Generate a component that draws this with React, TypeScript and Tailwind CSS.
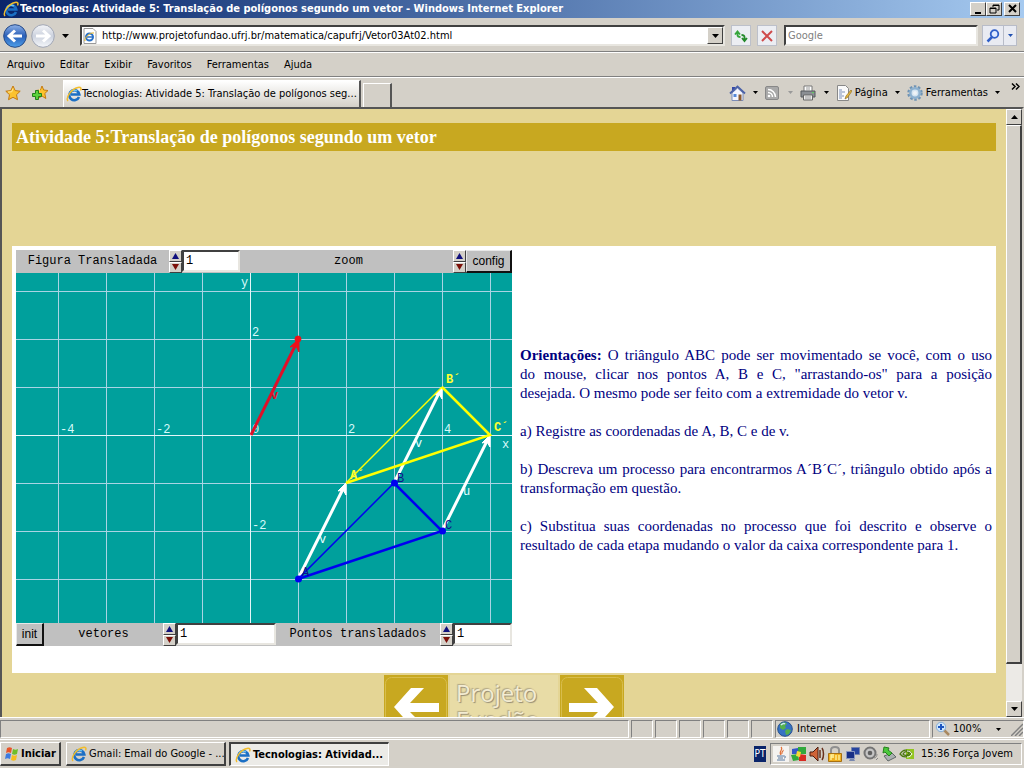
import type { ReactNode } from "react";

const raised = "border border-t-white border-l-white border-r-[#404040] border-b-[#404040] bg-[#d4d0c8]";
const sunken = "border-2 border-t-[#404040] border-l-[#404040] border-r-[#e8e6e0] border-b-[#e8e6e0] bg-white";

export default function App() {
    return (
        <div className="flex h-screen flex-col overflow-hidden bg-[#d4d0c8] font-['DejaVu_Sans_Condensed','Noto_Sans',sans-serif] text-[11px] leading-4 text-black">
            <TitleBar />
            <AddressRow />
            <MenuRow />
            <TabRow />
            <div className="flex min-h-0 flex-1 border-2 border-b-0 border-[#555] border-r-[#d4d0c8]">
                <Page />
                <Scrollbar />
            </div>
            <StatusBar />
            <Taskbar />
        </div>
    )
}

function TitleBar() {
    return (
        <header className="flex h-[18px] shrink-0 items-center bg-linear-to-r from-[#0a246a] to-[#a6caf0] pl-[3px] pr-1 text-white">
            <IeIcon className="mr-px size-4" />
            <h1 className="min-w-0 flex-1 truncate font-bold">
                Tecnologias: Atividade 5: Translação de polígonos segundo um vetor - Windows Internet Explorer
            </h1>
            <WindowButton label="Minimizar"><path d="M3 9h6v2H3z" fill="#000" /></WindowButton>
            <WindowButton label="Restaurar">
                <path d="M5 2h6v5H9M5 2v2M2 5h6v5H2z M5 2.5h6 M2 5.5h6" fill="none" stroke="#000" />
            </WindowButton>
            <span className="w-[2px]" />
            <WindowButton label="Fechar"><path d="M3 2l7 7M10 2L3 9" stroke="#000" strokeWidth="2" /></WindowButton>
        </header>
    )
}

function WindowButton({ label, children }: { label: string; children: ReactNode }) {
    return (
        <button type="button" aria-label={label} className={`flex h-[14px] w-4 items-center justify-center ${raised}`}>
            <svg viewBox="0 0 13 12" className="h-3 w-[13px]">{children}</svg>
        </button>
    )
}

function Caret({ className = "" }: { className?: string }) {
    return (
        <svg viewBox="0 0 7 4" className={`h-1 w-[7px] shrink-0 ${className}`}>
            <path d="M0 0h7L3.500 4z" fill="currentColor" />
        </svg>
    )
}

function AddressRow() {
    return (
        <div className="flex h-[34px] shrink-0 items-center border-b border-[#808080] pl-[3px] pr-[7px] pt-0.5">
            <button type="button" aria-label="Voltar"><RoundArrow /></button>
            <button type="button" aria-label="Avançar" className="ml-1"><RoundArrow forward /></button>
            <button type="button" aria-label="Páginas recentes" className="mx-[7px]"><Caret /></button>
            <div className={`ml-1 flex h-[21px] min-w-0 flex-1 items-center ${sunken}`}>
                <svg viewBox="0 0 16 16" className="size-4 shrink-0">
                    <path d="M2 .5h9l3 3v12H2z" fill="#fff" stroke="#999" />
                    <circle cx="7.500" cy="9" r="3.500" fill="none" stroke="#2871c8" strokeWidth="2" />
                    <path d="M5 9h6" stroke="#2871c8" strokeWidth="1.500" />
                    <path d="M3 13C2 10 8 4 12 5" fill="none" stroke="#e8b420" />
                </svg>
                <input
                    aria-label="Endereço"
                    className="min-w-0 flex-1 bg-transparent px-1 outline-none"
                    defaultValue="http://www.projetofundao.ufrj.br/matematica/capufrj/Vetor03At02.html"
                />
                <button type="button" aria-label="Mostrar endereços" className={`flex h-[17px] w-4 items-center justify-center ${raised}`}>
                    <Caret />
                </button>
            </div>
            <ToolButton label="Atualizar">
                <path d="M4.500 3v4q0 2 3 2M2 6.500L4.500 3.500 7 6.500" fill="none" stroke="#36a63c" strokeWidth="1.800" />
                <path d="M11.500 13V9q0-2-3-2M9 10l2.500 3 2.500-3" fill="none" stroke="#238a2a" strokeWidth="1.800" />
            </ToolButton>
            <ToolButton label="Parar">
                <path d="M3 3l10 10M13 3L3 13" stroke="#cf4b4b" strokeWidth="2" />
            </ToolButton>
            <input aria-label="Pesquisar" placeholder="Google" className={`ml-[7px] h-[21px] w-[194px] px-0.5 outline-none placeholder:text-[#808080] ${sunken}`} />
            <div className="ml-1 flex h-[21px] border border-[#b8bcc8] bg-[#e9ebf2]">
                <button type="button" aria-label="Buscar" className="w-5">
                    <svg viewBox="0 0 16 16" className="mx-auto size-4">
                        <circle cx="9.500" cy="6" r="3.800" fill="#dfeaff" stroke="#2f5fc8" strokeWidth="1.800" />
                        <path d="M7 9l-4.500 4.500" stroke="#2f5fc8" strokeWidth="2.500" />
                    </svg>
                </button>
                <button type="button" aria-label="Opções de busca" className="flex w-[13px] items-center justify-center border-l border-[#b8bcc8] text-[#2050b0]">
                    <Small />
                </button>
            </div>
        </div>
    )
}

function RoundArrow({ forward = false }: { forward?: boolean }) {
    return (
        <svg viewBox="0 0 24 24" className="block size-6">
            <defs>
                <linearGradient id={forward ? "fwd" : "back"} x1="0" y1="0" x2="0" y2="1">
                    <stop offset="0" stopColor={forward ? "#f4f5f8" : "#8fb2e8"} />
                    <stop offset=".5" stopColor={forward ? "#ccd2de" : "#2a5fb8"} />
                    <stop offset="1" stopColor={forward ? "#f5f7fa" : "#4fa0ea"} />
                </linearGradient>
            </defs>
            <circle cx="12" cy="12" r="11.300" fill={forward ? "url(#fwd)" : "url(#back)"} stroke={forward ? "#a0a6b4" : "#274a86"} />
            {forward
                ? <path d="M5 12h12M12 6.500l6 5.500-6 5.500" fill="none" stroke="#fff" strokeWidth="3" />
                : <path d="M19 12H7M12 6.500L6 12l6 5.500" fill="none" stroke="#fff" strokeWidth="3" />}
        </svg>
    )
}

function ToolButton({ label, children }: { label: string; children: ReactNode }) {
    return (
        <button type="button" aria-label={label} className="ml-[6px] flex h-[21px] w-5 items-center justify-center border border-[#bcc0ca] bg-[#eceef3]">
            <svg viewBox="0 0 16 16" className="size-4">{children}</svg>
        </button>
    )
}

function MenuRow() {
    const items = ["Arquivo", "Editar", "Exibir", "Favoritos", "Ferramentas", "Ajuda"];
    return (
        <nav className="flex h-[25px] shrink-0 items-center gap-[15px] border-b border-t border-b-[#808080] border-t-white pl-[7px]">
            {items.map((item) => <button key={item} type="button">{item}</button>)}
        </nav>
    )
}

function TabRow() {
    return (
        <div className="flex h-[30px] shrink-0 items-center border-t border-white">
            <button type="button" aria-label="Favoritos" className="ml-[5px]">
                <StarIcon />
            </button>
            <button type="button" aria-label="Adicionar a favoritos" className="ml-[11px]">
                <StarIcon plus />
            </button>
            <button type="button" className="ml-[15px] flex h-[27px] w-[298px] items-center self-end border-l border-r-2 border-t border-l-white border-r-[#555] border-t-white bg-linear-to-b from-white to-[#d4d0c8] pl-0.5 text-left">
                <IeIcon className="size-4" />
                <span className="whitespace-nowrap">Tecnologias: Atividade 5: Translação de polígonos seg...</span>
            </button>
            <button type="button" aria-label="Nova guia" className="ml-0.5 h-6 w-[29px] self-end border-l border-r-2 border-t border-l-white border-r-[#555] border-t-white" />
            <div className="ml-auto flex items-center pr-1">
                <button type="button" aria-label="Página inicial" className="flex items-center gap-[7px]">
                    <svg viewBox="0 0 17 16" className="h-4 w-[17px]">
                        <path d="M3 2h3v4H3z" fill="#3549a8" />
                        <path d="M3 8l5.500-5L14 8v7.500H3z" fill="#f4f6ff" stroke="#7b8cb8" />
                        <path d="M1 8.500L8.500 1.500 16 8.500" fill="none" stroke="#4b62a8" strokeWidth="1.800" />
                        <path d="M4.500 9h3v3h-3z" fill="#5588d8" />
                        <path d="M9.500 9.500h3v6h-3z" fill="#8a5a30" />
                    </svg>
                    <Small />
                </button>
                <button type="button" aria-label="Feeds" className="ml-[7px] flex items-center gap-[9px] text-[#999]">
                    <svg viewBox="0 0 14 14" className="size-[14px]">
                        <rect x=".5" y=".5" width="13" height="13" rx="1.500" fill="#a9a9a9" stroke="#888" />
                        <circle cx="4" cy="10" r="1.300" fill="#fff" />
                        <path d="M3 6.500a4.500 4.500 0 0 1 4.500 4.500M3 3.500a7.500 7.500 0 0 1 7.500 7.500" fill="none" stroke="#fff" strokeWidth="1.500" />
                    </svg>
                    <Small />
                </button>
                <button type="button" aria-label="Imprimir" className="ml-[7px] flex items-center gap-2">
                    <svg viewBox="0 0 16 16" className="size-4">
                        <path d="M4 1h8v6H4z" fill="#fff" stroke="#777" />
                        <path d="M1 6h14v6H1z" fill="#8b8f94" stroke="#55585c" />
                        <path d="M3.500 10h9v5h-9z" fill="#eee" stroke="#666" />
                        <path d="M5 12h6M5 14h6M6 3h4M6 5h4" stroke="#999" />
                        <path d="M12 7h2v1h-2z" fill="#5fd05f" />
                    </svg>
                    <Small />
                </button>
                <button type="button" className="ml-[7px] flex items-center">
                    <svg viewBox="0 0 16 16" className="mr-[3px] size-4">
                        <path d="M1.500.5h8l3 3v12h-11z" fill="#fafafa" stroke="#888" />
                        <path d="M3 5h3M3 7h6M3 9h3M3 11h5M3 13h3" stroke="#7c90b8" />
                        <path d="M15 5l-5 6-1 3 2.500-1.500L16 6z" fill="#e6b93a" stroke="#93702a" strokeWidth=".7" />
                    </svg>
                    Página
                    <Small className="ml-[7px]" />
                </button>
                <button type="button" className="ml-[7px] flex items-center">
                    <svg viewBox="0 0 16 16" className="mr-[3px] size-4">
                        <circle cx="8" cy="8" r="6.500" fill="none" stroke="#6f93b4" strokeWidth="2.500" strokeDasharray="2.500 1.600" />
                        <circle cx="8" cy="8" r="4.700" fill="#d5e5f2" stroke="#8db1d0" strokeWidth="2.500" />
                        <circle cx="8" cy="8" r="2" fill="#eef3f7" />
                    </svg>
                    Ferramentas
                    <Small className="ml-[7px]" />
                </button>
                <button type="button" aria-label="Mais" className="mb-3 ml-[11px]">
                    <svg viewBox="0 0 9 7" className="h-[7px] w-[9px]"><path d="M1 .5l3 3-3 3M5 .5l3 3-3 3" fill="none" stroke="#000" strokeWidth="1.500" /></svg>
                </button>
            </div>
        </div>
    )
}

function Small({ className = "" }: { className?: string }) {
    return (
        <svg viewBox="0 0 5 3" className={`h-[3px] w-[5px] shrink-0 ${className}`}>
            <path d="M0 0h5L2.500 3z" fill="currentColor" />
        </svg>
    )
}

function StarIcon({ plus = false }: { plus?: boolean }) {
    return (
        <svg viewBox="0 0 16 16" className="block size-4">
            <path
                d={plus ? "M10 1l1.700 4L16 5.500 12.800 8.500l1 5L10 11l-4 2.500 1-5L4 5.500 8.300 5z" : "M8 1l2.200 4.600 5 .6-3.700 3.500 1 5L8 12.300 3.500 14.700l1-5L.8 6.200l5-.6z"}
                fill="#fcc22e"
                stroke="#c47a12"
                strokeLinejoin="round"
            />
            <path d="M8 3.500L6.800 6.800 3 7" fill="none" stroke="#ffe998" />
            {plus && <path d="M3.500 5.500h3v3h3v3h-3v3h-3v-3h-3v-3h3z" fill="#5cd23c" stroke="#23801c" />}
        </svg>
    )
}

function Page() {
    return (
        <main className="min-w-0 flex-1 overflow-hidden bg-[#e4d595] px-[10px] pt-[14px] font-['Liberation_Serif',serif] text-[15px] leading-[19px]">
            <h2 className="h-7 bg-[#c8a820] px-1 text-lg font-bold leading-7 text-white">
                Atividade 5:Translação de polígonos segundo um vetor
            </h2>
            <section className="mt-[95px] flex h-[427px] items-center gap-2 bg-white p-1">
                <Applet />
                <div className="flex min-w-0 flex-1 flex-col gap-[19px] pb-[19px] text-justify text-[#000080]">
                    <p>
                        <b>Orientações:</b> O triângulo ABC pode ser movimentado se você, com o uso do&nbsp;mouse, clicar nos
                        pontos A, B e C, "arrastando-os" para a posição desejada.&nbsp;O mesmo pode ser feito com a extremidade do vetor v.
                    </p>
                    <p>a) Registre as coordenadas de A, B, C e de v.</p>
                    <p>b) Descreva um processo para encontrarmos A´B´C´, triângulo obtido após a transformação em questão.</p>
                    <p>
                        c) Substitua suas coordenadas no processo que foi descrito e observe o resultado de cada etapa
                        mudando o valor da caixa correspondente para 1.
                    </p>
                </div>
            </section>
            <div className="mt-0.5 flex justify-center">
                <a href="#anterior" aria-label="Atividade anterior"><PageArrow /></a>
                <a href="#projeto" className="mx-0.5 w-[108px] bg-[#e8dca6] pl-[6px] pt-1 font-['Open_Sans',sans-serif] text-2xl leading-[27px] text-[#f3ecd2] [text-shadow:1px_1px_1px_#958c74,-1px_-1px_1px_#b4a986]">
                    Projeto<br />Fundão
                </a>
                <a href="#proxima" aria-label="Próxima atividade"><PageArrow next /></a>
            </div>
        </main>
    )
}

function PageArrow({ next = false }: { next?: boolean }) {
    return (
        <svg viewBox="0 0 64 64" className="block size-16">
            <path d="M0 0h64v64H0z" fill="#c8a820" />
            <rect x="1.500" y="2.500" width="61" height="60" rx="6" fill="none" stroke="#d8bd4c" />
            {next
                ? <path d="M9 28h29L24 13h13l17 19-17 19H24l14-14H9z" fill="#fff" />
                : <path d="M55 28H26l14-15H27L10 32l17 19h13L26 37h29z" fill="#fff" />}
        </svg>
    )
}

function Applet() {
    return (
        <div className="w-[496px] shrink-0 self-start bg-[#c0c0c0] font-['Liberation_Mono',monospace] text-xs leading-[23px]">
            <div className="flex h-[23px]">
                <label htmlFor="figura" className="w-[153px] text-center">Figura Transladada</label>
                <Spinner name="Figura Transladada" />
                <ValueInput id="figura" className="w-[58px]" />
                <span className="flex-1 pl-1 text-center">zoom</span>
                <Spinner name="zoom" />
                <AppletButton className="w-[46px]">config</AppletButton>
            </div>
            <Graph />
            <div className="flex h-[23px]">
                <AppletButton className="w-7">init</AppletButton>
                <label htmlFor="vetores" className="w-[119px] text-center">vetores</label>
                <Spinner name="vetores" />
                <ValueInput id="vetores" className="w-[100px]" />
                <label htmlFor="pontos" className="flex-1 text-center">Pontos transladados</label>
                <Spinner name="Pontos transladados" />
                <ValueInput id="pontos" className="w-[59px]" />
            </div>
        </div>
    )
}

function AppletButton({ className, children }: { className: string; children: ReactNode }) {
    return (
        <button type="button" className={`h-[23px] border-2 border-l border-t border-[#111] border-l-[#e8e8e8] border-t-[#e8e8e8] text-center font-['Liberation_Sans',sans-serif] leading-5 ${className}`}>
            {children}
        </button>
    )
}

function Spinner({ name }: { name: string }) {
    return (
        <div className="flex w-[13px] flex-col">
            <button type="button" aria-label={`${name}: aumentar`} className={`flex flex-1 items-center justify-center ${raised}`}>
                <svg viewBox="0 0 7 6" className="h-[6px] w-[7px]"><path d="M3.500 0L7 6H0z" fill="#10107c" /></svg>
            </button>
            <button type="button" aria-label={`${name}: diminuir`} className={`flex flex-1 items-center justify-center ${raised}`}>
                <svg viewBox="0 0 7 6" className="h-[6px] w-[7px]"><path d="M0 0h7L3.500 6z" fill="#7c1008" /></svg>
            </button>
        </div>
    )
}

function ValueInput({ id, className }: { id: string; className: string }) {
    return <input id={id} defaultValue="1" className={`h-[22px] px-0.5 outline-none ${sunken} ${className}`} />
}

const columns = [42, 90, 138, 186, 282, 330, 378, 426, 474];
const rows = [18, 66, 114, 210, 258, 306];

const ticks = [
    { text: "y", x: 225, y: 13 },
    { text: "x", x: 486, y: 175 },
    { text: "2", x: 236, y: 63 },
    { text: "-2", x: 236, y: 256 },
    { text: "-4", x: 44, y: 160 },
    { text: "-2", x: 140, y: 160 },
    { text: "0", x: 236, y: 160 },
    { text: "2", x: 332, y: 160 },
    { text: "4", x: 428, y: 160 },
];

function Graph() {
    return (
        <svg viewBox="0 0 496 350" className="block h-[350px] w-full bg-[#00a09c]">
            <g stroke="#a9d4e4" shapeRendering="crispEdges">
                {columns.map((x) => <line key={x} x1={x + 0.5} x2={x + 0.5} y1="0" y2="350" />)}
                {rows.map((y) => <line key={y} x1="0" x2="496" y1={y + 0.5} y2={y + 0.5} />)}
                <path d="M234.500 0V350M0 162.500H496" stroke="#e4f6f8" />
            </g>
            <g fill="#d8fafa">
                {ticks.map((t) => <text key={`${t.x}-${t.y}`} x={t.x} y={t.y}>{t.text}</text>)}
            </g>
            {/* vetor v */}
            <g stroke="#f01018" fill="#f01018">
                <path d="M235 162L282 67" stroke="#e01028" strokeWidth="3" />
                <path d="M283 66l-9 8 6-1 3 6z" />
                <circle cx="282" cy="66" r="3" />
            </g>
            <text x="255" y="126" fill="#e01028" fontWeight="bold">v</text>
            <Arrow x={282} y={306} />
            <Arrow x={378} y={210} />
            <Arrow x={426} y={258} />
            <g fill="#e8ffff">
                <text x="303" y="270">v</text>
                <text x="399" y="174">v</text>
                <text x="447" y="222">u</text>
            </g>
            {/* A'B'C' */}
            <g stroke="#ffff00" fill="none">
                <path d="M330 210L426 114" strokeWidth="1.500" />
                <path d="M426 114L474 162L330 210" strokeWidth="2.500" />
            </g>
            <g fill="#ffff30" fontWeight="bold">
                <text x="334" y="206">A´</text>
                <text x="430" y="110">B´</text>
                <text x="478" y="158">C´</text>
            </g>
            {/* ABC */}
            <g stroke="#0000f0" fill="none">
                <path d="M282 306L378 210" strokeWidth="1.500" />
                <path d="M378 210L426 258L282 306" strokeWidth="2.500" />
            </g>
            <g fill="#0000f0">
                <circle cx="282.500" cy="306" r="3.500" />
                <circle cx="378.500" cy="210" r="3.500" />
                <circle cx="426.500" cy="258" r="3.500" />
            </g>
            <g fill="#10108c">
                <text x="286" y="303">A</text>
                <text x="381" y="209">B</text>
                <text x="429" y="256">C</text>
            </g>
        </svg>
    )
}

// every vertex moves by (1, 2) units, one unit is 48px
function Arrow({ x, y }: { x: number; y: number }) {
    return (
        <g transform={`translate(${x} ${y})`}>
            <path d="M0 0L46 -92" stroke="#fff" strokeWidth="3" />
            <path d="M48 -96l-8 8 5-1 3 5z" fill="#fff" stroke="#fff" />
        </g>
    )
}

function Scrollbar() {
    return (
        <div className="flex w-4 shrink-0 flex-col bg-[#eceae6]">
            <button type="button" aria-label="Rolar para cima" className={`flex h-4 items-center justify-center ${raised}`}>
                <Caret className="rotate-180" />
            </button>
            <div className={`min-h-0 grow-[539] ${raised} border-r-2 border-b-2`} />
            <div className="min-h-0 grow-[37]" />
            <button type="button" aria-label="Rolar para baixo" className={`flex h-4 items-center justify-center ${raised}`}>
                <Caret />
            </button>
        </div>
    )
}

const panel = "h-[18px] border border-l-[#808080] border-t-[#808080] border-r-white border-b-white";

function StatusBar() {
    return (
        <footer className="flex h-[22px] shrink-0 items-center gap-0.5 border-t border-white pt-px">
            <div className={`flex-1 ${panel}`} />
            {[1, 2, 3, 4, 5, 6].map((n) => <div key={n} className={`w-[22px] ${panel}`} />)}
            <div className={`flex w-[155px] items-center gap-1 pl-px ${panel}`}>
                <svg viewBox="0 0 16 16" className="size-4">
                    <circle cx="8" cy="8" r="7.300" fill="#3672c4" stroke="#26508c" />
                    <path d="M3 3c3-2 6-2 7 0L8 5l1 2-3 2-3-2zM10 8l4 1-2 4-3 1-1-4z" fill="#54b04c" />
                    <path d="M4 4c1-1 3-2 4-1" fill="none" stroke="#cfe6ff" strokeWidth="1.500" />
                </svg>
                Internet
            </div>
            <button type="button" className={`flex w-[92px] items-center pl-0.5 ${panel}`}>
                <svg viewBox="0 0 16 16" className="mr-0.5 size-4">
                    <path d="M9 9l5 5" stroke="#a88860" strokeWidth="2.500" />
                    <circle cx="6" cy="6" r="4.700" fill="#cfe6fb" stroke="#88aed4" />
                    <path d="M3 6h6M6 3v6" stroke="#1e56c0" strokeWidth="2" />
                </svg>
                100%
                <Small className="ml-[15px]" />
                <svg viewBox="0 0 12 14" className="ml-auto h-[14px] w-3">
                    <path d="M0 14L12 2M4 14l8-8M8 14l4-4" stroke="#808080" strokeWidth="1.500" />
                </svg>
            </button>
        </footer>
    )
}

function Taskbar() {
    return (
        <footer className="flex h-[29px] shrink-0 items-center border-t border-white pr-0.5">
            <button type="button" className={`flex h-6 w-[61px] items-center gap-px border-r-2 border-b-2 pl-[3px] font-bold ${raised}`}>
                <svg viewBox="0 0 16 16" className="size-4">
                    <path d="M3 2c2-1 3-1 5 0L7 7C5 6 4 6 2 7z" fill="#e8552a" />
                    <path d="M9 3c2 1 3 1 5 0l-1 5c-2 1-3 1-5 0z" fill="#6fbe28" />
                    <path d="M2 8c2-1 3-1 5 0l-1 5c-2-1-3-1-5 0z" fill="#3d7be0" />
                    <path d="M8 9c2 1 3 1 5 0l-1 5c-2 1-3 1-5 0z" fill="#f6be1c" />
                </svg>
                Iniciar
            </button>
            <button type="button" className={`ml-[5px] flex h-6 w-40 items-center gap-0.5 border-r-2 border-b-2 pl-1 ${raised}`}>
                <IeIcon className="size-4" />
                <span className="whitespace-nowrap">Gmail: Email do Google - ...</span>
            </button>
            <button type="button" className="ml-[3px] flex h-6 w-40 items-center gap-0.5 border-2 border-b border-r border-[#404040] border-b-white border-r-white bg-[#ecebe7] pl-1 font-bold">
                <IeIcon className="size-4" />
                <span className="whitespace-nowrap">Tecnologias: Atividad...</span>
            </button>
            <span className="ml-auto mr-1 h-4 w-3 bg-[#0a246a] text-center text-[10px] text-white">PT</span>
            <div className="flex h-[22px] items-center gap-0.5 border border-b-white border-l-[#808080] border-r-white border-t-[#808080] pl-0.5 pr-2">
                <TrayIcon>
                    <path d="M0 0h16v16H0z" fill="#f5f3f0" />
                    <path d="M8 1c3 3-3 4 0 8M10 4c1 1-2 2-1 4" fill="none" stroke="#e07038" strokeWidth="1.200" />
                    <path d="M4 10h7M5 12h5M4 14h8M11 10c2 0 2 2 0 2" fill="none" stroke="#5878a0" />
                </TrayIcon>
                <TrayIcon>
                    <path d="M1 3l6-1v6L1 8z" fill="#3558c8" />
                    <path d="M7 1h8v7H7z" fill="#32a83c" />
                    <path d="M0 9l7-1 1 6-6 1z" fill="#32a83c" />
                    <path d="M8 8l7 1v6H8z" fill="#d82a22" />
                    <path d="M6 5l4 1-1 5-4-1z" fill="#f8d838" />
                </TrayIcon>
                <TrayIcon>
                    <path d="M1 6h3l5-5v14l-5-5H1z" fill="#d06438" stroke="#4a1c10" />
                    <path d="M11 4v8M13 2c2 3 2 9 0 12" fill="none" stroke="#68301c" strokeWidth="1.500" />
                </TrayIcon>
                <TrayIcon>
                    <path d="M4 8V4c0-4 8-4 8 0v4" fill="none" stroke="#909090" strokeWidth="2" />
                    <path d="M1.500 7.500h13v8h-13z" fill="#f0b020" stroke="#a87010" />
                    <path d="M4 14V9h3M4 11h3M9 9v5M12 9v5" fill="none" stroke="#fff4a0" strokeWidth="1.300" />
                </TrayIcon>
                <TrayIcon>
                    <path d="M6.500 1.500h8v7h-8z" fill="#2745a0" stroke="#7684ac" />
                    <path d="M1.500 5.500h8v7h-8z" fill="#182f86" stroke="#8896c0" />
                    <path d="M4 15h6l-1-2H5z" fill="#7888b0" />
                </TrayIcon>
                <TrayIcon>
                    <circle cx="7" cy="7" r="5.500" fill="#c4c4c4" stroke="#747474" strokeWidth="2" />
                    <circle cx="7" cy="7" r="2.300" fill="#606060" />
                    <path d="M11 12c2 0 3-2 3-4M13 14l2-2" fill="none" stroke="#888" />
                </TrayIcon>
                <TrayIcon>
                    <path d="M3 10l8-3 4 4-8 4z" fill="#aab0b0" stroke="#606868" />
                    <path d="M3 1l5 1-1 2 4 3-3 3-4-4-2 1z" fill="#4cc83c" stroke="#24801c" />
                </TrayIcon>
                <TrayIcon>
                    <path d="M7 3h8v10H7z" fill="#92c520" />
                    <path d="M1 8c3-5 8-5 11-1-3 5-8 5-11 1zM4 8c2-3 4-3 6-1-2 3-4 3-6 1z" fill="none" stroke="#4d7810" strokeWidth="1.300" />
                    <path d="M8 5c2 0 4 1 5 3-1 2-3 3-5 3" fill="none" stroke="#fff" />
                </TrayIcon>
                <span className="ml-1 whitespace-nowrap">15:36 Força Jovem</span>
            </div>
        </footer>
    )
}

function TrayIcon({ children }: { children: ReactNode }) {
    return <svg viewBox="0 0 16 16" className="size-4 shrink-0">{children}</svg>
}

function IeIcon({ className = "" }: { className?: string }) {
    return (
        <svg viewBox="0 0 16 16" className={`shrink-0 ${className}`}>
            <path d="M13 11A5 5 0 1 1 13.300 8.500H5" fill="none" stroke="#1b6fc4" strokeWidth="2.600" />
            <path d="M4 6.500C5 4 9 3.500 11 5" fill="none" stroke="#6cc4f4" strokeWidth="1.500" />
            <path d="M2 15C-.5 12 5 3 12 1.500c3-.6 3.500 1 2.500 3" fill="none" stroke="#f2bd2c" strokeWidth="1.500" />
        </svg>
    )
}
